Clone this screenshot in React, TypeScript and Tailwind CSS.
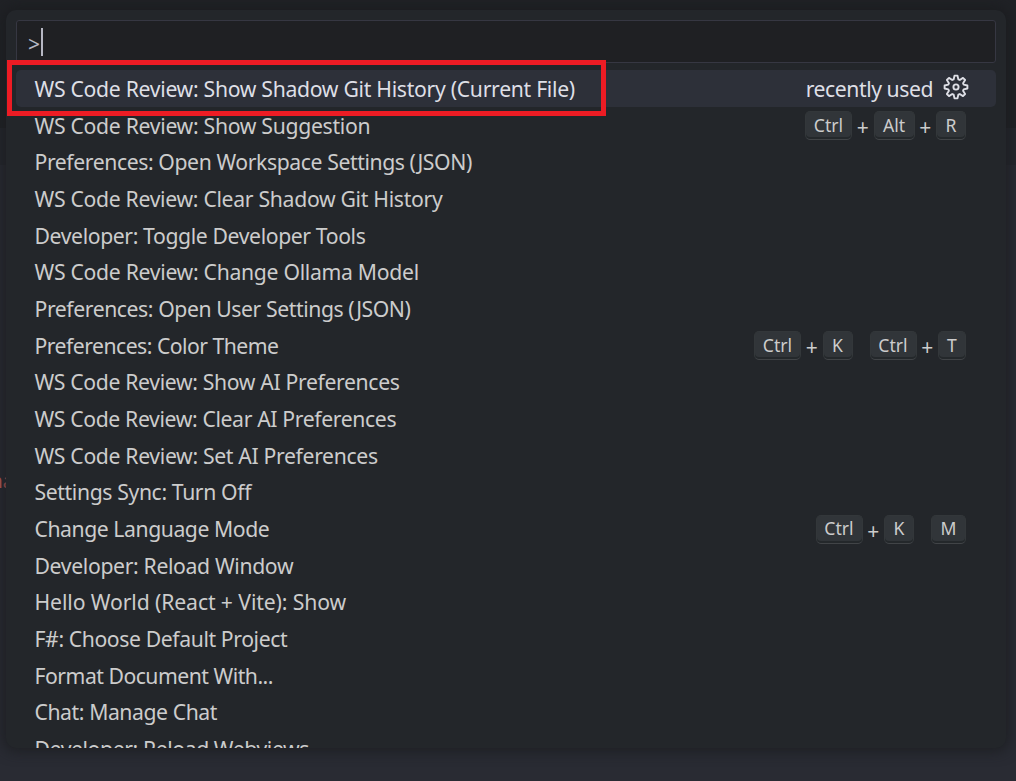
import React from "react";

type Command = { label: string; tracking: string; keys?: string[][] };

const commands: Command[] = [
  { label: "WS Code Review: Show Suggestion", tracking: "tracking-[-0.3px]", keys: [["Ctrl", "Alt", "R"]] },
  { label: "Preferences: Open Workspace Settings (JSON)", tracking: "tracking-[-0.41px]" },
  { label: "WS Code Review: Clear Shadow Git History", tracking: "tracking-[-0.31px]" },
  { label: "Developer: Toggle Developer Tools", tracking: "tracking-[-0.39px]" },
  { label: "WS Code Review: Change Ollama Model", tracking: "tracking-[-0.3px]" },
  { label: "Preferences: Open User Settings (JSON)", tracking: "tracking-[-0.42px]" },
  { label: "Preferences: Color Theme", tracking: "tracking-[-0.52px]", keys: [["Ctrl", "K"], ["Ctrl", "T"]] },
  { label: "WS Code Review: Show AI Preferences", tracking: "tracking-[-0.35px]" },
  { label: "WS Code Review: Clear AI Preferences", tracking: "tracking-[-0.37px]" },
  { label: "WS Code Review: Set AI Preferences", tracking: "tracking-[-0.34px]" },
  { label: "Settings Sync: Turn Off", tracking: "tracking-[-0.38px]" },
  { label: "Change Language Mode", tracking: "tracking-[-0.44px]", keys: [["Ctrl", "K"], ["M"]] },
  { label: "Developer: Reload Window", tracking: "tracking-[-0.35px]" },
  { label: "Hello World (React + Vite): Show", tracking: "tracking-[-0.11px]" },
  { label: "F#: Choose Default Project", tracking: "tracking-[-0.4px]" },
  { label: "Format Document With...", tracking: "tracking-[-0.5px]" },
  { label: "Chat: Manage Chat", tracking: "tracking-[-0.43px]" },
  { label: "Developer: Reload Webviews", tracking: "tracking-[-0.41px]" },
];

const keyWidths: Record<string, string> = {
  Ctrl: "w-[47px]",
  Alt: "w-[41px]",
  R: "w-[30px]",
  K: "w-[30px]",
  T: "w-[28px]",
  M: "w-[35px]",
};

function Key({ name }: { name: string }) {
  return (
    <kbd
      className={`flex h-[29px] items-center justify-center rounded-[5px] border border-b-[#414447] border-[#33373a] bg-[#313539] font-[Noto_Sans,sans-serif] text-[17.6px] leading-none text-[#cccccc] shadow-[inset_0_-2px_0_#24282b] ${keyWidths[name]}`}
    >
      {name}
    </kbd>
  );
}

function Keybinding({ chords }: { chords: string[][] }) {
  return (
    <div className="flex h-[29px] gap-[17px]">
      {chords.map((chord, i) => (
        <div key={i} className="flex">
          {chord.map((key, j) => (
            <React.Fragment key={key}>
              {j > 0 && (
                <span className="w-[21.5px] pt-[2px] text-center text-[21px] leading-[28px]">+</span>
              )}
              <Key name={key} />
            </React.Fragment>
          ))}
        </div>
      ))}
    </div>
  );
}

const gearTeeth = Array.from({ length: 8 }, (_, i) => i * 45);

function GearIcon() {
  const point = (r: number, deg: number) => {
    const a = (deg * Math.PI) / 180;
    return `${(13 + r * Math.sin(a)).toFixed(2)} ${(13 - r * Math.cos(a)).toFixed(2)}`;
  };
  const outline = gearTeeth
    .flatMap((a) => [point(8, a - 17), point(11.5, a - 7.5), point(11.5, a + 7.5), point(8, a + 17)])
    .join(" L");
  return (
    <svg viewBox="0 0 26 26" className="mb-[3px] size-[26px]" fill="none" stroke="currentColor" strokeWidth="1.9" strokeLinejoin="round">
      <path d={`M${outline} Z`} />
      <circle cx="13" cy="13" r="2.6" />
    </svg>
  );
}

export default function App() {
  return (
    <div className="relative h-[781px] w-[1016px] overflow-hidden bg-[#23252a] font-[Noto_Sans,sans-serif] text-[21.2px] text-[#cccccc]">
      <div className="flex h-full flex-col">
        <div className="h-[128px] bg-[#202226]" />
        <div className="h-[37px] bg-[#25272e]" />
        <div className="flex-1 bg-[#292b33]" />
      </div>
      <span className="absolute -left-[9px] top-[468px] text-[19px] leading-[27px] text-[#c4605b]">na</span>

      <div className="absolute left-[6px] top-[10px] flex h-[738px] w-[1000px] flex-col overflow-hidden rounded-[10px] bg-[#23262a] px-[10px] pt-[10px] shadow-[0_0_14px_3px_rgba(25,27,30,0.75)]">
        <div className="flex h-[43px] shrink-0 items-center rounded-[3px] border border-[#363742] bg-[#1f2023] pl-[11px]">
          <span className="w-[13px] pt-[6px] text-[21px] leading-none text-[#b6b7c3]">&gt;</span>
          <span className="h-[28px] w-[2px] bg-[#b6b7c3]" />
        </div>
        <div className="mt-[7px] flex h-[37px] shrink-0 items-center rounded-[5px] bg-[#2d3039] pl-[18.5px] pr-[27px] text-[#dedfe6]">
          <span className="grow whitespace-nowrap leading-[37px] tracking-[-0.3px]">WS Code Review: Show Shadow Git History (Current File)</span>
          <span className="mr-[10px] whitespace-nowrap leading-[37px] tracking-[-0.45px]">recently used</span>
          <GearIcon />
        </div>
        {commands.map((c) => (
          <div key={c.label} className="flex h-[36.67px] shrink-0 items-center justify-between pl-[18.5px] pr-[30px] pt-px">
            <span className={`whitespace-nowrap leading-[36px] ${c.tracking}`}>{c.label}</span>
            {c.keys && <Keybinding chords={c.keys} />}
          </div>
        ))}
      </div>
      <div className="absolute left-[7px] top-[60px] h-[56px] w-[599px] border-[5px] border-[#ed1c24]" />
    </div>
  );
}
